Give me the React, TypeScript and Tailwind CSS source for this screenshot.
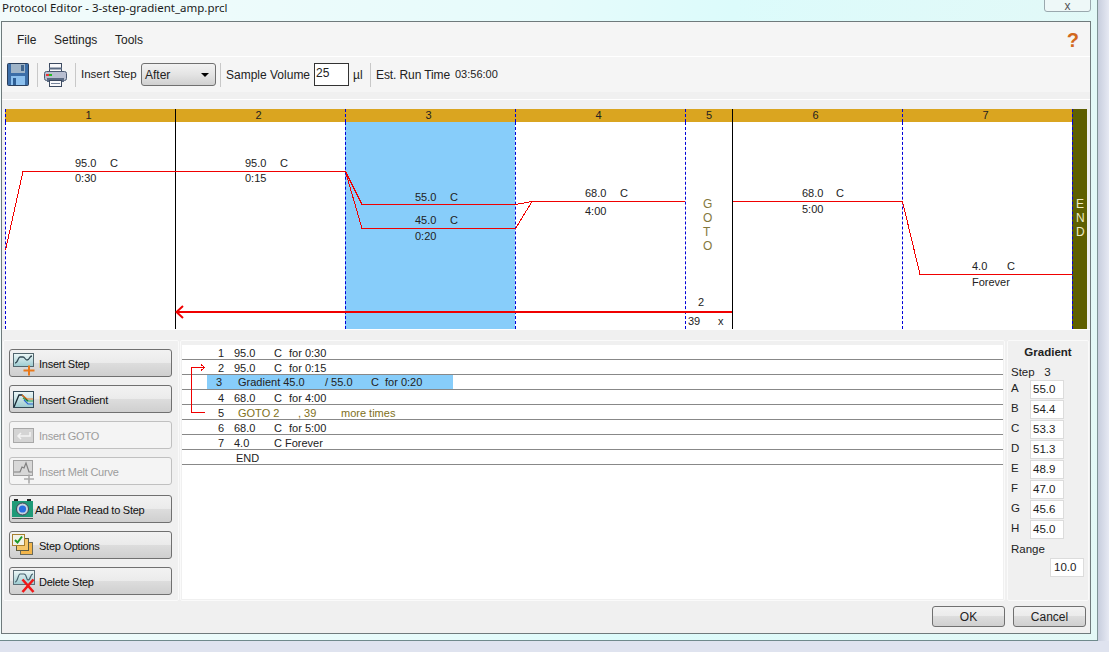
import React from "react";

const FONT = "font-['Liberation_Sans',Arial,sans-serif]";

function Save() {
  return (
    <svg width="22" height="23" viewBox="0 0 22 23">
      <rect x="0.5" y="0.5" width="21" height="22" rx="1" fill="#3c6ea8" stroke="#2a3f5c" />
      <rect x="4" y="1" width="14" height="9" fill="#9fb4c8" />
      <rect x="14" y="2" width="3" height="6" fill="#41658c" />
      <rect x="4" y="13" width="14" height="9" fill="#8cc0ee" />
      <rect x="6" y="15" width="3" height="7" fill="#2f5f96" />
    </svg>
  );
}
function Printer() {
  return (
    <svg width="23" height="24" viewBox="0 0 23 24">
      <rect x="5.5" y="0.5" width="12" height="8" fill="#f8f8fa" stroke="#3c4a60" />
      <path d="M5 5.5h13" stroke="#5a6a82" strokeWidth="2" />
      <rect x="0.5" y="8.5" width="22" height="9" rx="2" fill="#b8bed0" stroke="#4c5a72" />
      <rect x="2" y="11" width="3" height="2" fill="#e33" />
      <rect x="5" y="11" width="3" height="2" fill="#2b2" />
      <rect x="3" y="15" width="17" height="4" fill="#5a6a82" />
      <rect x="5.5" y="17.5" width="12" height="6" fill="#f8f8fa" stroke="#3c4a60" />
      <path d="M7 20.5h9" stroke="#76849a" />
    </svg>
  );
}
function Defs({ id }: { id: string }) {
  return (
    <defs>
      <linearGradient id={id} x1="0" y1="0" x2="0" y2="1">
        <stop offset="0" stopColor="#eef8f8" />
        <stop offset="1" stopColor="#9ccbd0" />
      </linearGradient>
    </defs>
  );
}
function IconStep() {
  return (
    <svg width="28" height="26" viewBox="0 0 28 26">
      <Defs id="tileA" />
      <rect x="3.5" y="3.5" width="20" height="13" fill="url(#tileA)" stroke="#52666e" />
      <path d="M5 13 C8 13 8 7 10 7 H13 C15 7 15 10 17 10 C20 10 19 6 22 6" fill="none" stroke="#334a55" strokeWidth="1.3" />
      <path d="M13.5 20.5h11M19 15.5v10" stroke="#e8781a" strokeWidth="2" />
    </svg>
  );
}
function IconGrad() {
  return (
    <svg width="28" height="26" viewBox="0 0 28 26">
      <Defs id="tileB" />
      <rect x="3.5" y="5.5" width="20" height="16" fill="url(#tileB)" stroke="#344a56" />
      <path d="M4 21 L9 9 H12 L18 15" fill="none" stroke="#1a2a34" strokeWidth="1.3" />
      <path d="M12 9 L17 13 H23" fill="none" stroke="#e8781a" strokeWidth="1.2" />
      <path d="M13 12 L17 15 H23" fill="none" stroke="#2ea84a" strokeWidth="1.2" />
      <path d="M14 14 L18 18 H23" fill="none" stroke="#2a6ad0" strokeWidth="1.2" />
    </svg>
  );
}
function IconGoto() {
  return (
    <svg width="28" height="26" viewBox="0 0 28 26">
      <rect x="3.5" y="6.5" width="20" height="14" fill="#d4d4d4" stroke="#a8a8a8" />
      <path d="M20 10v4H8M11 11l-3 3 3 3" fill="none" stroke="#f4f4f4" strokeWidth="1.5" />
    </svg>
  );
}
function IconMelt() {
  return (
    <svg width="28" height="26" viewBox="0 0 28 26">
      <rect x="3.5" y="2.5" width="19" height="15" fill="#d8d8d8" stroke="#a0a0a0" />
      <path d="M4 14 H10 L12 9 L14 10 L16 5 L19 14 H22" fill="none" stroke="#808080" strokeWidth="1.2" />
      <path d="M14 21h10M19 16.5v9" stroke="#aaaaaa" strokeWidth="1.6" />
    </svg>
  );
}
function IconPlate() {
  return (
    <svg width="24" height="26" viewBox="0 0 24 26">
      <rect x="2" y="5" width="21" height="16" fill="#1f9a78" />
      <rect x="4" y="3" width="4" height="2" fill="#222" />
      <rect x="17" y="3" width="4" height="2" fill="#222" />
      <circle cx="12.5" cy="13" r="6" fill="#c8d4e0" stroke="#445" />
      <circle cx="12.5" cy="13" r="3.6" fill="#2a6fe0" />
      <rect x="2" y="22" width="21" height="1" fill="#555" />
    </svg>
  );
}
function IconOptions() {
  return (
    <svg width="28" height="26" viewBox="0 0 28 26">
      <rect x="10.5" y="10.5" width="12" height="12" fill="#f2b54a" stroke="#6a6a5a" />
      <rect x="6.5" y="6.5" width="12" height="12" fill="#f6c76a" stroke="#5c5a40" />
      <rect x="2.5" y="2.5" width="12" height="11" fill="#f2f2e8" stroke="#a88030" />
      <path d="M5 8l2.5 2.5L12 4.5" fill="none" stroke="#1a9a2a" strokeWidth="2" />
    </svg>
  );
}
function IconDelete() {
  return (
    <svg width="28" height="26" viewBox="0 0 28 26">
      <Defs id="tileC" />
      <rect x="3.5" y="2.5" width="21" height="14" fill="url(#tileC)" stroke="#5d6f78" />
      <path d="M5 14 C8 14 8 6 10 6 H14 C17 6 16 12 18 12 C21 12 20 6 23 6" fill="none" stroke="#46626e" strokeWidth="1.2" />
      <path d="M12.5 11.5 L23.5 24 M23.5 11.5 L12.5 24" stroke="#f01818" strokeWidth="2.6" />
    </svg>
  );
}

function ActionButton({ icon, label, disabled, mt, tight }: { icon: React.ReactNode; label: string; disabled?: boolean; mt: string; tight?: boolean }) {
  return (
    <div
      className={`${mt} flex h-[28px] w-[163px] items-center overflow-visible rounded-[3px] border ${
        disabled
          ? "border-[#c0c0c0] bg-[#f4f4f4] text-[#9c9c9c]"
          : "border-[#707070] bg-[linear-gradient(#f2f2f2_0%,#ebebeb_48%,#dddddd_50%,#cfcfcf_100%)] text-[#111]"
      }`}
    >
      <div className={tight ? "w-[25px] shrink-0" : "w-[29px] shrink-0"}>{icon}</div>
      <span className="mt-[1px] text-[11px] leading-[14px] tracking-[-0.25px] whitespace-nowrap">{label}</span>
    </div>
  );
}

const rowLine = "flex h-[15px] items-center border-b border-[#888] pt-[2px] text-[11px] leading-[14px] whitespace-nowrap text-[#222] pl-[32px]";

function Row({ n, t, c, rest }: { n: string; t: string; c: string; rest: string }) {
  return (
    <div className={rowLine}>
      <span className="w-[20px] pl-[4px]">{n}</span>
      <span className="w-[40px]">{t}</span>
      <span className={c}>C</span>
      <span>{rest}</span>
    </div>
  );
}

function Chart() {
  const cols = [
    { n: "1", w: "w-[170px]", l: "border-dashed border-[#0000d8]" },
    { n: "2", w: "w-[170px]", l: "border-solid border-black" },
    { n: "3", w: "w-[170px]", l: "border-dashed border-[#0000d8]" },
    { n: "4", w: "w-[170px]", l: "border-dashed border-[#0000d8]" },
    { n: "5", w: "w-[47px]", l: "border-dashed border-[#0000d8]" },
    { n: "6", w: "w-[170px]", l: "border-solid border-black" },
    { n: "7", w: "w-[170px]", l: "border-dashed border-[#0000d8]" },
  ];
  const gold = "text-[#84783c] text-[12px]";
  const end = "text-[#f0ecc8] text-[12px]";
  const labels: [string, number, number, string?][] = [
    ["95.0", 75, 163], ["C", 110, 163], ["0:30", 75, 178],
    ["95.0", 245, 163], ["C", 280, 163], ["0:15", 245, 178],
    ["55.0", 415, 197], ["C", 450, 197], ["45.0", 415, 220], ["C", 450, 220], ["0:20", 415, 236],
    ["68.0", 585, 193], ["C", 620, 193], ["4:00", 585, 211],
    ["G", 703, 204, gold], ["O", 703, 218, gold], ["T", 703, 232, gold], ["O", 703, 246, gold],
    ["2", 698, 302], ["39", 688, 321], ["x", 718, 321],
    ["68.0", 802, 193], ["C", 836, 193], ["5:00", 802, 209],
    ["4.0", 972, 266], ["C", 1007, 266], ["Forever", 972, 282],
    ["E", 1076, 204, end], ["N", 1076, 218, end], ["D", 1076, 232, end],
  ];
  return (
    <div className="relative flex h-[220px] w-[1082px] flex-col">
      <div className="flex h-[13px] bg-[#daa520] text-[11px] leading-[13px] text-[#222]">
        {cols.map((c) => (
          <div key={c.n} className={`${c.w} border-l ${c.l} ${c.n === "5" ? "" : "pr-[4px]"} text-center`}>{c.n}</div>
        ))}
        <div className="w-[15px] border-l border-dashed border-[#0000d8] bg-[#5f5f00]" />
      </div>
      <div className="flex h-[207px] bg-white">
        {cols.map((c) => (
          <div key={c.n} className={`${c.w} border-l ${c.l} ${c.n === "3" ? "bg-[#87cdfa]" : ""}`} />
        ))}
        <div className="w-[15px] border-l border-dashed border-[#0000d8] bg-[#5f5f00]" />
      </div>
      <svg className="absolute left-0 top-0" width="1082" height="220" viewBox="5 109 1082 220" shapeRendering="crispEdges">
        <g fill="none" stroke="#f00000" strokeWidth="1">
          <path d="M5.5 250 L23 171.5 H345.5 L362 204.5 H515.5 L532 201.5" />
          <path d="M345.5 171.5 L362 228.5 H515.5 L532 201.5 H685" />
          <path d="M733 201.5 H902.5 L920 274.5 H1072" />
        </g>
        <path d="M177 312 H732" stroke="#f00000" strokeWidth="2" fill="none" />
        <path d="M183 306 L176.5 312 L183 318" stroke="#f00000" strokeWidth="2" fill="none" shapeRendering="auto" />
      </svg>
      {labels.map(([t, x, y, c], i) => (
        <span
          key={i}
          className={`absolute whitespace-nowrap leading-[14px] ${c ?? "text-[11px] text-[#222]"}`}
          style={{ left: x - 5, top: y - 7 - 109 }}
        >
          {t}
        </span>
      ))}
    </div>
  );
}

export default function App() {
  const wells: [string, string][] = [
    ["A", "55.0"], ["B", "54.4"], ["C", "53.3"], ["D", "51.3"],
    ["E", "48.9"], ["F", "47.0"], ["G", "45.6"], ["H", "45.0"],
  ];
  return (
    <div className={`${FONT} relative h-[652px] w-[1109px] overflow-hidden bg-[linear-gradient(100deg,#f2fbfb_0%,#e6fbfb_45%,#dcfbfb_60%,#e4f8f6_100%)] text-[#222]`}>
      <div className="h-[21px] pl-[2px] pt-[1px] text-[11.5px] leading-[14px] text-[#1a1a1a] font-['Noto_Sans',sans-serif]">
        Protocol Editor - 3-step-gradient_amp.prcl
      </div>
      {/* close button */}
      <div className="absolute left-[1044px] top-[-6px] h-[18px] w-[47px] rounded-b-[3px] border border-[#9aa8ae] bg-[#eef8f8] text-center text-[12px] leading-[22px] text-[#555]">
        x
      </div>
      {/* window glass edges */}
      <div className="absolute left-[1098px] top-0 h-[652px] w-[11px] bg-[linear-gradient(90deg,#c8cede,#e6e9f3)]" />
      <div className="absolute left-0 top-[641px] h-[11px] w-[1109px] bg-[#dfe3ef]" />
      <div className="absolute left-[1097px] top-0 h-[641px] w-[1px] bg-[#7f9496]" />
      <div className="absolute left-0 top-[640px] h-[1px] w-[1098px] bg-[#6f8a8c]" />

      <div className="ml-[1px] flex h-[613px] w-[1090px] flex-col border border-[#6f7a7c] bg-[#f0f0f0]">
        {/* menu */}
        <div className="flex h-[35px] shrink-0 items-center border-b border-white bg-[#f5f5f5] pl-[15px] pt-[2px] text-[12px] text-[#222]">
          <span className="w-[37px]">File</span>
          <span className="w-[61px]">Settings</span>
          <span>Tools</span>
          <span className="ml-auto mr-[11px] text-[20px] leading-[20px] font-bold text-[#d2691e]">?</span>
        </div>
        {/* toolbar */}
        <div className="flex h-[35px] shrink-0 items-center bg-[#f5f5f5] text-[12px] text-[#222]">
          <div className="ml-[5px]"><Save /></div>
          <div className="ml-[8px] h-[24px] w-px bg-[#c8c8c8]" />
          <div className="ml-[6px]"><Printer /></div>
          <div className="ml-[8px] h-[24px] w-px bg-[#c8c8c8]" />
          <span className="ml-[5px] w-[60px] whitespace-nowrap text-[11.5px]">Insert Step</span>
          <div className="flex h-[23px] w-[75px] items-center justify-between rounded-[3px] border border-[#707070] bg-[linear-gradient(#f2f2f2,#e4e4e4_50%,#d0d0d0)] pl-[3px] pr-[6px]">
            <span>After</span>
            <span className="h-0 w-0 border-x-[4px] border-t-[4px] border-x-transparent border-t-black" />
          </div>
          <div className="ml-[4px] h-[24px] w-px bg-[#c8c8c8]" />
          <span className="ml-[5px] w-[88px] whitespace-nowrap">Sample Volume</span>
          <div className="h-[23px] w-[35px] border border-[#333] bg-white pl-[1px] leading-[18px]">25</div>
          <span className="ml-[4px] w-[17px]">µl</span>
          <div className="h-[24px] w-px bg-[#c8c8c8]" />
          <span className="ml-[5px] w-[79px] whitespace-nowrap tracking-[-0.1px]">Est. Run Time</span>
          <span className="whitespace-nowrap text-[11px]">03:56:00</span>
        </div>
        {/* chart panel */}
        <div className="mt-[7px] flex h-[231px] shrink-0 flex-col border-y border-white pl-[3px] pt-[9px]">
          <Chart />
        </div>
        {/* lower panels */}
        <div className="mt-[10px] flex h-[261px] shrink-0 pl-[1px]">
          <div className="flex w-[176px] shrink-0 flex-col rounded-[2px] border border-[#fafafa] pl-[5px] pt-[8px]">
            <ActionButton mt="" icon={<IconStep />} label="Insert Step" />
            <ActionButton mt="mt-[8px]" icon={<IconGrad />} label="Insert Gradient" />
            <ActionButton mt="mt-[8px]" disabled icon={<IconGoto />} label="Insert GOTO" />
            <ActionButton mt="mt-[8px]" disabled icon={<IconMelt />} label="Insert Melt Curve" />
            <ActionButton mt="mt-[10px]" tight icon={<IconPlate />} label="Add Plate Read to Step" />
            <ActionButton mt="mt-[8px]" icon={<IconOptions />} label="Step Options" />
            <ActionButton mt="mt-[8px]" icon={<IconDelete />} label="Delete Step" />
          </div>
          <div className="relative ml-[1px] w-[825px] shrink-0 rounded-[2px] border border-[#fafafa] pl-[1px] pt-[4px]">
            <div className="h-[254px] w-[821px] bg-white">
              <Row n="1" t="95.0" c="w-[15px]" rest="for 0:30" />
              <Row n="2" t="95.0" c="w-[15px]" rest="for 0:15" />
              <div className={`${rowLine} !pl-[25px] !pt-0`}>
                <div className="flex h-[14px] w-[246px] items-center bg-[#87cdfa] pl-[5px]">
                  <span className="w-[26px] pl-[4px]">3</span>
                  <span className="w-[56px]">Gradient 45.0</span>
                  <span className="ml-[31px] w-[46px]">/ 55.0</span>
                  <span className="w-[14px]">C</span>
                  <span>for 0:20</span>
                </div>
              </div>
              <Row n="4" t="68.0" c="w-[15px]" rest="for 4:00" />
              <div className={`${rowLine} text-[#80701a]`}>
                <span className="w-[24px] pl-[4px] text-[#222]">5</span>
                <span className="w-[60px]">GOTO 2</span>
                <span className="w-[43px]">, 39</span>
                <span>more times</span>
              </div>
              <Row n="6" t="68.0" c="w-[15px]" rest="for 5:00" />
              <Row n="7" t="4.0" c="w-[11px]" rest="Forever" />
              <div className={`${rowLine} !pl-[54px]`}>END</div>
            </div>
            <svg className="absolute left-[8px] top-[22px]" width="20" height="55" viewBox="0 0 20 55" shapeRendering="crispEdges">
              <path d="M15.5 4.5 H2.5 V49.5 H15.5" fill="none" stroke="#f00000" />
              <path d="M16 4.5 L12 1.5 M16 4.5 L12 7.5" fill="none" stroke="#f00000" />
            </svg>
          </div>
          <div className="ml-[2px] w-[82px] shrink-0 rounded-[2px] border border-[#fafafa] text-[11.5px]">
            <div className="pt-[4px] text-center font-bold leading-[14px]">Gradient</div>
            <div className="mt-[6px] pl-[3px] leading-[14px]">Step&nbsp;&nbsp;&nbsp;3</div>
            <div className="flex flex-col">
              {wells.map(([k, v]) => (
                <div key={k} className="flex h-[20px] items-center pl-[3px]">
                  <span className="w-[19px]">{k}</span>
                  <div className="h-[19px] w-[34px] border border-[#dcdcdc] bg-white pl-[2px] leading-[17px]">{v}</div>
                </div>
              ))}
            </div>
            <div className="mt-[3px] pl-[3px] leading-[14px]">Range</div>
            <div className="ml-[42px] mt-[2px] h-[19px] w-[34px] border border-[#dcdcdc] bg-white pl-[3px] leading-[17px]">10.0</div>
          </div>
        </div>
        {/* footer */}
        <div className="mt-[5px] flex justify-end gap-[8px] pr-[4px] text-[12px]">
          <div className="flex h-[21px] w-[73px] items-center justify-center rounded-[3px] border border-[#707070] bg-[linear-gradient(#f2f2f2,#ebebeb_48%,#dddddd_50%,#cfcfcf)]">OK</div>
          <div className="flex h-[21px] w-[73px] items-center justify-center rounded-[3px] border border-[#707070] bg-[linear-gradient(#f2f2f2,#ebebeb_48%,#dddddd_50%,#cfcfcf)]">Cancel</div>
        </div>
      </div>
    </div>
  );
}
